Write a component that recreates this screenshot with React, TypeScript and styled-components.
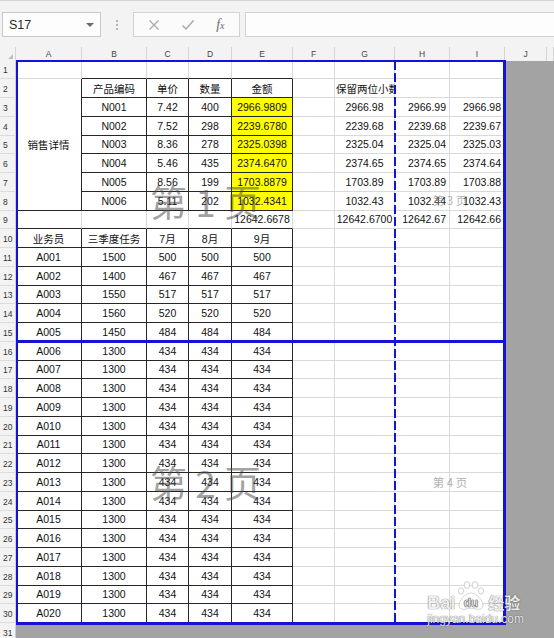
import React from 'react';
import styled, { createGlobalStyle } from 'styled-components';

const GlobalStyle = createGlobalStyle`
  html, body {
    margin: 0;
    padding: 0;
  }
  body {
    width: 554px;
    height: 638px;
    overflow: hidden;
    font-family: 'Liberation Sans', 'Noto Sans CJK SC', sans-serif;
  }
`;

const BLUE = '#1414d4';
const OUTSIDE = '#a3a3a3';
const HEAD_BG = '#f3f3f3';

// column widths A..J, then K runs off the window
const COLS = [66, 65, 42, 43, 61, 42, 60, 55, 55, 42];
const LETTERS = ['A', 'B', 'C', 'D', 'E', 'F', 'G', 'H', 'I', 'J'];
const ROW_H = 18.75;
const TEMPLATE_COLS = `16px ${COLS.map(c => `${c}px`).join(' ')} 1fr`;
const TEMPLATE_ROWS = `13.5px repeat(31, ${ROW_H}px)`;

type Edge = 'grid' | 'ink' | 'none';
type Align = 'left' | 'center' | 'right';

interface Spec {
  text?: string;
  align?: Align;
  fill?: string;
  right?: Edge;
  bottom?: Edge;
  span?: number;
}

const edgeColor = (e: Edge = 'grid') =>
  e === 'ink' ? '#262626' : e === 'none' ? 'transparent' : '#d9d9d9';

const products = [
  ['N001', '7.42', '400', '2966.9809', '2966.98', '2966.99', '2966.98'],
  ['N002', '7.52', '298', '2239.6780', '2239.68', '2239.68', '2239.67'],
  ['N003', '8.36', '278', '2325.0398', '2325.04', '2325.04', '2325.03'],
  ['N004', '5.46', '435', '2374.6470', '2374.65', '2374.65', '2374.64'],
  ['N005', '8.56', '199', '1703.8879', '1703.89', '1703.89', '1703.88'],
  ['N006', '5.11', '202', '1032.4341', '1032.43', '1032.44', '1032.43'],
];

const staff = [
  ['A001', '1500', '500'],
  ['A002', '1400', '467'],
  ['A003', '1550', '517'],
  ['A004', '1560', '520'],
  ['A005', '1450', '484'],
  ...Array.from({ length: 15 }, (_, i) => [`A0${String(i + 6).padStart(2, '0')}`, '1300', '434']),
];

const blank = (n: number, extra: Spec = {}): Spec[] => Array.from({ length: n }, () => ({ ...extra }));
const boxed = (texts: string[]): Spec[] => texts.map(text => ({ text, right: 'ink', bottom: 'ink' }));

function rowCells(r: number): Spec[] {
  if (r === 1) return [{}, ...blank(4, { bottom: 'ink' }), ...blank(4)];
  if (r === 2)
    return [
      { text: '销售详情', span: 7, right: 'ink', bottom: 'ink' },
      ...boxed(['产品编码', '单价', '数量', '金额']),
      {},
      { text: '保留两位小数', align: 'left' },
      {},
      {},
    ];
  if (r <= 8) {
    const p = products[r - 3];
    return [
      ...boxed(p.slice(0, 3)),
      { text: p[3], fill: '#ffff00', right: 'ink', bottom: 'ink' },
      {},
      { text: p[4] },
      { text: p[5], align: 'right' },
      { text: p[6], align: 'right' },
    ];
  }
  if (r === 9)
    return [
      ...blank(4, { bottom: 'ink' }),
      { text: '12642.6678', bottom: 'ink' },
      {},
      { text: '12642.6700' },
      { text: '12642.67', align: 'right' },
      { text: '12642.66', align: 'right' },
    ];
  if (r === 10) return [...boxed(['业务员', '三季度任务', '7月', '8月', '9月']), ...blank(4)];
  const s = staff[r - 11];
  return [...boxed([s[0], s[1], s[2], s[2], s[2]]), ...blank(4)];
}

const Window = styled.div`
  position: relative;
  width: 554px;
  height: 638px;
  overflow: hidden;
  display: flex;
  flex-direction: column;
  background: ${OUTSIDE};
`;

/* ---------- formula bar ---------- */

const FormulaBar = styled.div`
  flex: none;
  height: 47px;
  box-sizing: border-box;
  display: flex;
  align-items: flex-start;
  padding: 11px 0 0 2px;
  background: ${HEAD_BG};
  border-top: 1px solid #d4d4d4;
`;

const NameBox = styled.div`
  box-sizing: border-box;
  width: 99px;
  height: 25px;
  display: flex;
  align-items: center;
  justify-content: space-between;
  padding: 0 6px 0 6px;
  background: #fdfdfd;
  border: 1px solid #c9c9c9;
  font-size: 12.5px;
  color: #2b2b2b;
`;

const DropArrow = styled.span`
  width: 0;
  height: 0;
  border-left: 4px solid transparent;
  border-right: 4px solid transparent;
  border-top: 4px solid #6a6a6a;
`;

const Grip = styled.div`
  width: 32px;
  height: 25px;
  display: flex;
  flex-direction: column;
  align-items: center;
  justify-content: center;
  gap: 2px;

  span {
    width: 2px;
    height: 2px;
    background: #b5b5b5;
  }
`;

const FxBox = styled.div`
  box-sizing: border-box;
  width: 107px;
  height: 25px;
  display: flex;
  align-items: center;
  justify-content: space-around;
  padding: 0 4px;
  background: #fbfbfb;
  border: 1px solid #d3d3d3;
`;

const FxLabel = styled.span`
  font-family: 'Liberation Serif', serif;
  font-style: italic;
  font-size: 14px;
  color: #6b6b6b;

  small {
    font-size: 10px;
  }
`;

const FormulaInput = styled.div`
  flex: 1;
  height: 25px;
  margin-left: 5px;
  box-sizing: border-box;
  background: #fdfdfd;
  border: 1px solid #d3d3d3;
  border-right: none;
`;

/* ---------- sheet ---------- */

const SheetStack = styled.div`
  flex: none;
  display: grid;

  & > * {
    grid-area: 1 / 1;
  }
`;

const Sheet = styled.div`
  display: grid;
  grid-template-columns: ${TEMPLATE_COLS};
  grid-template-rows: ${TEMPLATE_ROWS};
`;

const Corner = styled.div`
  display: flex;
  align-items: flex-end;
  justify-content: flex-end;
  padding: 0 2px 2px 0;
  background: ${HEAD_BG};
  border-right: 1px solid #d6d6d6;

  &::after {
    content: '';
    border-left: 5px solid transparent;
    border-bottom: 5px solid #c2c2c2;
  }
`;

const ColHead = styled.div`
  box-sizing: border-box;
  display: flex;
  align-items: center;
  justify-content: center;
  background: ${HEAD_BG};
  border-right: 1px solid #d4d4d4;
  font-size: 8.5px;
  color: #444;
`;

const RowHead = styled.div`
  box-sizing: border-box;
  display: flex;
  align-items: flex-end;
  padding: 0 0 3px 3px;
  background: ${HEAD_BG};
  border-bottom: 1px solid #dcdcdc;
  border-right: 1px solid #cfcfcf;
  font-size: 8.5px;
  color: #333;
`;

const Cell = styled.div<{ $align?: Align; $fill?: string; $right?: Edge; $bottom?: Edge; $span?: number }>`
  box-sizing: border-box;
  min-width: 0;
  display: flex;
  align-items: center;
  justify-content: ${({ $align }) =>
    $align === 'left' ? 'flex-start' : $align === 'right' ? 'flex-end' : 'center'};
  padding: 0 ${({ $align }) => ($align === 'left' ? '1px' : '3px')};
  white-space: nowrap;
  font-size: 10.5px;
  color: #111;
  background: ${({ $fill }) => $fill ?? '#fff'};
  border-right: 1px solid ${({ $right }) => edgeColor($right)};
  border-bottom: 1px solid ${({ $bottom }) => edgeColor($bottom)};
  grid-row: ${({ $span }) => ($span ? `span ${$span}` : 'auto')};
`;

const OutCell = styled.div<{ $wide?: boolean }>`
  background: ${OUTSIDE};
  grid-column: ${({ $wide }) => ($wide ? '2 / -1' : 'auto')};
`;

/* ---------- page layout overlay ---------- */

const Overlay = styled.div`
  display: grid;
  grid-template-columns: ${TEMPLATE_COLS};
  grid-template-rows: ${TEMPLATE_ROWS};
  pointer-events: none;
`;

const PrintFrame = styled.div`
  grid-column: 2 / 11;
  grid-row: 2 / 32;
  margin: -1px -1px -2px 0;
  border-style: solid;
  border-color: ${BLUE};
  border-width: 2px 3px 3px 2px;
`;

const PageBreakRow = styled.div`
  grid-column: 2 / 11;
  grid-row: 17;
  align-self: start;
  height: 3px;
  margin-top: -1.5px;
  background: ${BLUE};
`;

const PageBreakColumn = styled.div`
  grid-column: 9;
  grid-row: 2 / 32;
  justify-self: start;
  width: 2px;
  margin-left: -1px;
  background: repeating-linear-gradient(to bottom, ${BLUE} 0 9px, transparent 9px 12px);
`;

const PageLabel = styled.div<{ $col: string; $row: string; $big?: boolean }>`
  grid-column: ${({ $col }) => $col};
  grid-row: ${({ $row }) => $row};
  display: flex;
  align-items: center;
  justify-content: center;
  white-space: pre;
  font-family: 'Noto Sans CJK SC', sans-serif;
  font-size: ${({ $big }) => ($big ? '37px' : '11.5px')};
  color: ${({ $big }) => ($big ? 'rgba(70, 70, 70, 0.5)' : 'rgba(120, 120, 120, 0.6)')};
  line-height: 1;
`;

/* ---------- baidu watermark ---------- */

const BaiduMark = styled.div`
  position: absolute;
  right: 30px;
  bottom: 12px;
  display: flex;
  flex-direction: column;
  align-items: flex-start;
  color: rgba(255, 255, 255, 0.92);
  text-shadow: 0 0 1px rgba(0, 0, 0, 0.55), 0 0 1px rgba(0, 0, 0, 0.35);
  pointer-events: none;
`;

const BaiduTop = styled.div`
  display: flex;
  align-items: flex-end;
`;

const BaiText = styled.span`
  font-family: 'Liberation Sans', sans-serif;
  font-weight: bold;
  font-size: 18px;
  line-height: 16px;
`;

const JingYan = styled.span`
  font-family: 'Noto Sans CJK SC', sans-serif;
  font-weight: bold;
  font-size: 16px;
  line-height: 17px;
  margin-left: 1px;
`;

const Domain = styled.span`
  font-family: 'Liberation Sans', sans-serif;
  font-size: 12px;
  line-height: 13px;
  margin-top: 2px;
`;

const Paw = () => (
  <svg width="32" height="32" viewBox="0 0 32 32">
    <g fill="rgba(255,255,255,0.9)" stroke="rgba(0,0,0,0.22)" strokeWidth="0.8">
      <ellipse cx="6" cy="12" rx="2.6" ry="3.2" />
      <ellipse cx="12" cy="6" rx="2.8" ry="3.4" />
      <ellipse cx="20" cy="6" rx="2.8" ry="3.4" />
      <ellipse cx="26" cy="12" rx="2.6" ry="3.2" />
      <path d="M16 14 C10 14 4 22 4 26 C4 30 8 31 11 30 C14 29 18 29 21 30 C24 31 28 30 28 26 C28 22 22 14 16 14 Z" />
      <text
        x="16"
        y="28"
        textAnchor="middle"
        fontFamily="Liberation Sans, sans-serif"
        fontWeight="bold"
        fontSize="12"
        fill="rgba(255,255,255,0.95)"
        stroke="rgba(0,0,0,0.3)"
        strokeWidth="0.5"
      >
        du
      </text>
    </g>
  </svg>
);

const CancelIcon = () => (
  <svg width="12" height="12" viewBox="0 0 12 12">
    <path d="M1.5 1.5 L10.5 10.5 M10.5 1.5 L1.5 10.5" stroke="#a9a9a9" strokeWidth="1.3" fill="none" />
  </svg>
);

const CheckIcon = () => (
  <svg width="14" height="12" viewBox="0 0 14 12">
    <path d="M1.5 6.5 L5 10 L12.5 1.5" stroke="#a9a9a9" strokeWidth="1.5" fill="none" />
  </svg>
);

const ROWS = Array.from({ length: 30 }, (_, i) => i + 1);

export default function App() {
  return (
    <>
      <GlobalStyle />
      <Window>
        <FormulaBar>
          <NameBox>
            S17
            <DropArrow />
          </NameBox>
          <Grip>
            <span />
            <span />
            <span />
          </Grip>
          <FxBox>
            <CancelIcon />
            <CheckIcon />
            <FxLabel>
              f<small>x</small>
            </FxLabel>
          </FxBox>
          <FormulaInput />
        </FormulaBar>

        <SheetStack>
          <Sheet>
            <Corner />
            {LETTERS.map(l => (
              <ColHead key={l}>{l}</ColHead>
            ))}
            <ColHead />
            {ROWS.map(r => (
              <React.Fragment key={r}>
                <RowHead>{r}</RowHead>
                {rowCells(r).map((c, i) => (
                  <Cell
                    key={i}
                    $align={c.align}
                    $fill={c.fill}
                    $right={c.right}
                    $bottom={c.bottom}
                    $span={c.span}
                  >
                    {c.text}
                  </Cell>
                ))}
                <OutCell />
                <OutCell />
              </React.Fragment>
            ))}
            <RowHead>31</RowHead>
            <OutCell $wide />
          </Sheet>

          <Overlay>
            <PageLabel $col="2 / 9" $row="2 / 17" $big>
              第 1 页
            </PageLabel>
            <PageLabel $col="2 / 9" $row="17 / 32" $big>
              第 2 页
            </PageLabel>
            <PageLabel $col="9 / 11" $row="2 / 17">
              第 3 页
            </PageLabel>
            <PageLabel $col="9 / 11" $row="17 / 32">
              第 4 页
            </PageLabel>
            <PageBreakColumn />
            <PageBreakRow />
            <PrintFrame />
          </Overlay>
        </SheetStack>

        <BaiduMark>
          <BaiduTop>
            <BaiText>Bai</BaiText>
            <Paw />
            <JingYan>经验</JingYan>
          </BaiduTop>
          <Domain>jingyan.baidu.com</Domain>
        </BaiduMark>
      </Window>
    </>
  );
}
